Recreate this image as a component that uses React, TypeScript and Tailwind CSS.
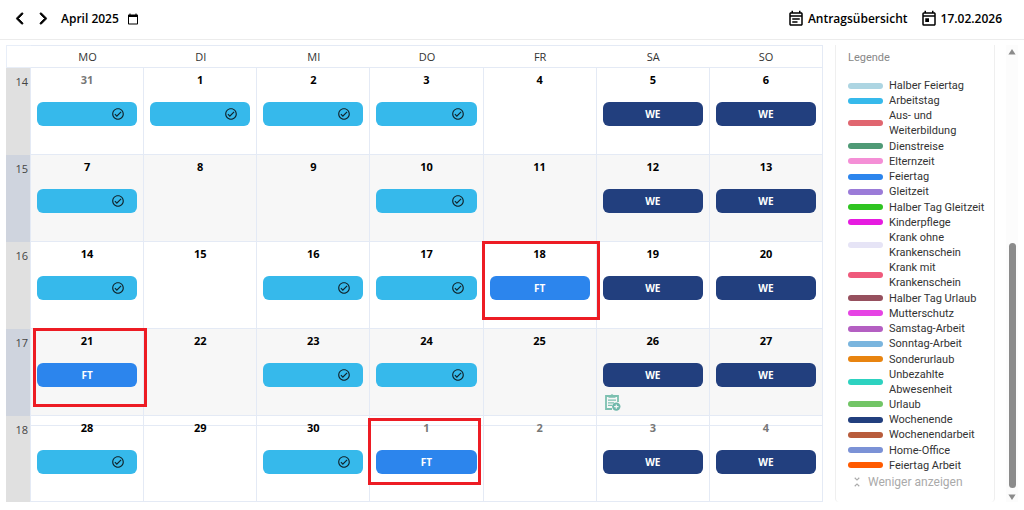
import React from 'react';
import { FaChevronLeft, FaChevronRight } from 'react-icons/fa6';
import {
  MdCalendarToday,
  MdOutlineCheckCircle,
  MdOutlineEventNote,
  MdOutlineToday,
  MdUnfoldLess,
} from 'react-icons/md';
import clsx from 'clsx';

type Kind = 'AT' | 'FT' | 'WE';

interface Day {
  label: number;
  kind?: Kind;
  outside?: boolean;
  request?: boolean;
  mark?: string;
}

interface Week {
  number: number;
  days: Day[];
}

const weekdays = ['MO', 'DI', 'MI', 'DO', 'FR', 'SA', 'SO'];

const weeks: Week[] = [
  {
    number: 14,
    days: [
      { label: 31, kind: 'AT', outside: true },
      { label: 1, kind: 'AT' },
      { label: 2, kind: 'AT' },
      { label: 3, kind: 'AT' },
      { label: 4 },
      { label: 5, kind: 'WE' },
      { label: 6, kind: 'WE' },
    ],
  },
  {
    number: 15,
    days: [
      { label: 7, kind: 'AT' },
      { label: 8 },
      { label: 9 },
      { label: 10, kind: 'AT' },
      { label: 11 },
      { label: 12, kind: 'WE' },
      { label: 13, kind: 'WE' },
    ],
  },
  {
    number: 16,
    days: [
      { label: 14, kind: 'AT' },
      { label: 15 },
      { label: 16, kind: 'AT' },
      { label: 17, kind: 'AT' },
      { label: 18, kind: 'FT', mark: '-top-px bottom-2 -left-0.5 -right-1' },
      { label: 19, kind: 'WE' },
      { label: 20, kind: 'WE' },
    ],
  },
  {
    number: 17,
    days: [
      { label: 21, kind: 'FT', mark: '-top-px bottom-2 left-0.5 -right-1' },
      { label: 22 },
      { label: 23, kind: 'AT' },
      { label: 24, kind: 'AT' },
      { label: 25 },
      { label: 26, kind: 'WE', request: true },
      { label: 27, kind: 'WE' },
    ],
  },
  {
    number: 18,
    days: [
      { label: 28, kind: 'AT' },
      { label: 29 },
      { label: 30, kind: 'AT' },
      { label: 1, kind: 'FT', outside: true, mark: 'top-0.5 bottom-4 -left-0.5 right-0.5' },
      { label: 2, outside: true },
      { label: 3, kind: 'WE', outside: true },
      { label: 4, kind: 'WE', outside: true },
    ],
  },
];

const legend = [
  { name: 'Halber Feiertag', color: 'bg-[#add5e2]' },
  { name: 'Arbeitstag', color: 'bg-[#36b9eb]' },
  { name: 'Aus- und Weiterbildung', color: 'bg-[#e06670]' },
  { name: 'Dienstreise', color: 'bg-[#4f9a76]' },
  { name: 'Elternzeit', color: 'bg-[#f48fd6]' },
  { name: 'Feiertag', color: 'bg-[#2c85ed]' },
  { name: 'Gleitzeit', color: 'bg-[#9b7bd8]' },
  { name: 'Halber Tag Gleitzeit', color: 'bg-[#2fc421]' },
  { name: 'Kinderpflege', color: 'bg-[#e61be0]' },
  { name: 'Krank ohne Krankenschein', color: 'bg-[#e6e4f6]' },
  { name: 'Krank mit Krankenschein', color: 'bg-[#ef5a7c]' },
  { name: 'Halber Tag Urlaub', color: 'bg-[#96505e]' },
  { name: 'Mutterschutz', color: 'bg-[#e644e4]' },
  { name: 'Samstag-Arbeit', color: 'bg-[#b45fc2]' },
  { name: 'Sonntag-Arbeit', color: 'bg-[#7ab5de]' },
  { name: 'Sonderurlaub', color: 'bg-[#e88410]' },
  { name: 'Unbezahlte Abwesenheit', color: 'bg-[#2dd2c0]' },
  { name: 'Urlaub', color: 'bg-[#72c566]' },
  { name: 'Wochenende', color: 'bg-[#223f7e]' },
  { name: 'Wochenendarbeit', color: 'bg-[#b85c3c]' },
  { name: 'Home-Office', color: 'bg-[#7b92d6]' },
  { name: 'Feiertag Arbeit', color: 'bg-[#ff5a00]' },
];

const chipColors: Record<Kind, string> = {
  AT: 'justify-end bg-[#36b9eb] pr-3 text-[#10242c]',
  FT: 'justify-center bg-[#2c85ed] text-white',
  WE: 'justify-center bg-[#223f7e] text-white',
};

function Chip({ kind }: { kind: Kind }) {
  return (
    <div className={clsx('flex h-6 items-center rounded-md text-[10px] font-bold', chipColors[kind])}>
      {kind === 'AT' ? <MdOutlineCheckCircle size={14} /> : kind}
    </div>
  );
}

function RequestIcon() {
  return (
    <svg width="18" height="18" viewBox="0 0 18 18" fill="none" aria-hidden="true">
      <path d="M9 16H3V3h12v6" stroke="#7cc0b0" strokeWidth="1.8" />
      <path d="M5.5 2.2h2a1.6 1.6 0 0 1 3 0h2v2.6h-7z" fill="#7cc0b0" />
      <path d="M5 7.2h8M5 9.8h6M5 12.4h4" stroke="#7cc0b0" strokeWidth="1.3" />
      <circle cx="13.3" cy="13.6" r="4.2" fill="#6fb8ab" />
      <path d="M13.3 11.4v4.4M11.1 13.6h4.4" stroke="#f6f6f6" strokeWidth="1.2" />
    </svg>
  );
}

function Toolbar() {
  return (
    <header className="flex h-10 items-center justify-between border-b border-[#ececec] pr-[22px] pb-0.5 pl-3.5 text-xs font-semibold">
      <div className="flex items-center">
        <button type="button" aria-label="Vorheriger Monat" className="mr-[9px]">
          <FaChevronLeft size={13} stroke="currentColor" strokeWidth={36} />
        </button>
        <button type="button" aria-label="Nächster Monat" className="mr-3">
          <FaChevronRight size={13} stroke="currentColor" strokeWidth={36} />
        </button>
        <button type="button" className="flex items-center gap-2">
          April 2025
          <MdCalendarToday size={12} />
        </button>
      </div>
      <div className="flex items-center gap-3">
        <button type="button" className="flex items-center gap-[3px]">
          <MdOutlineEventNote size={18} />
          Antragsübersicht
        </button>
        <button type="button" className="flex items-center gap-[3px]">
          <MdOutlineToday size={18} />
          17.02.2026
        </button>
      </div>
    </header>
  );
}

function Calendar() {
  return (
    <table className="w-full table-fixed border-separate border-spacing-0">
      <colgroup>
        <col className="w-[25px]" />
        {weekdays.map((name) => (
          <col key={name} />
        ))}
      </colgroup>
      <thead>
        <tr className="h-[23px] text-[11px] leading-4">
          <td className="border-y border-l border-[#e8eef8] p-0" />
          {weekdays.map((name) => (
            <th
              key={name}
              scope="col"
              className="border-y border-[#e4eaf5] p-0 font-normal text-[#333] last:border-r"
            >
              {name}
            </th>
          ))}
        </tr>
      </thead>
      <tbody>
        {weeks.map((week, row) => {
          const odd = row % 2 === 1;
          const last = row === weeks.length - 1;
          return (
            <tr key={week.number} className={last ? 'h-[86px]' : 'h-[87px]'}>
              <th
                scope="row"
                className={clsx(
                  'border-r border-[#e4eaf5] p-0 pt-1.5 pr-0.5 text-right align-top text-[11px] font-normal text-[#444]',
                  odd ? 'bg-[#cfd4de]' : 'bg-[#e0e0e0]',
                )}
              >
                {week.number}
              </th>
              {week.days.map((day, i) => (
                <td
                  key={i}
                  className={clsx(
                    'relative border-r border-b border-[#e4eaf5] px-1.5 py-0 align-top text-[11px]',
                    odd && 'bg-[#f7f7f7]',
                  )}
                >
                  {last && <div className="absolute inset-x-0 top-[9px] h-px bg-[#e4eaf5]" />}
                  <div
                    className={clsx(
                      'relative mb-3.5 pt-1 text-center leading-4 font-bold',
                      day.outside ? 'text-[#777]' : 'text-black',
                    )}
                  >
                    {day.label}
                  </div>
                  {day.kind && <Chip kind={day.kind} />}
                  {day.request && (
                    <button type="button" aria-label="Antrag anzeigen" className="mt-1.5 block">
                      <RequestIcon />
                    </button>
                  )}
                  {day.mark && (
                    <div className={clsx('absolute z-10 border-3 border-[#ed1c24]', day.mark)} />
                  )}
                </td>
              ))}
            </tr>
          );
        })}
      </tbody>
    </table>
  );
}

function Legend() {
  return (
    <aside className="w-40 shrink-0 rounded-b border-x border-[#efefef] pr-2 pl-3 font-[Roboto,sans-serif]">
      <h2 className="pt-[5px] text-[11px] leading-4 text-[#888]">Legende</h2>
      <ul className="mt-3 flex h-[395px] flex-col justify-between text-[11px] leading-[15px] text-[#333]">
        {legend.map((item) => (
          <li key={item.name} className="flex items-center gap-1.5">
            <span className={clsx('h-1.5 w-[35px] shrink-0 rounded-full', item.color)} />
            <span>{item.name}</span>
          </li>
        ))}
      </ul>
      <button type="button" className="ml-0.5 flex items-center gap-1 text-xs leading-[18px] text-[#aaa]">
        <MdUnfoldLess size={14} />
        Weniger anzeigen
      </button>
    </aside>
  );
}

function ScrollRail() {
  return (
    <div className="ml-[11px] flex w-3 shrink-0 flex-col items-center bg-[#fcfcfc] pt-1 pb-0.5 text-[#8b8b8b]" aria-hidden="true">
      <svg width="8" height="6" viewBox="0 0 8 6" fill="currentColor">
        <path d="M4 0l3.6 5.4H.4z" />
      </svg>
      <div className="min-h-[180px] flex-1" />
      <div className="h-[245px] w-[7px] rounded-full bg-[#8b8b8b]" />
      <svg className="mt-1.5" width="8" height="6" viewBox="0 0 8 6" fill="currentColor">
        <path d="M4 6L.4.6h7.2z" />
      </svg>
    </div>
  );
}

export default function App() {
  return (
    <div className="bg-white font-['Open_Sans','Noto_Sans',sans-serif] text-black">
      <Toolbar />
      <main className="flex px-1.5 pt-[5px] pb-2">
        <div className="mr-3 min-w-0 flex-1">
          <Calendar />
        </div>
        <Legend />
        <ScrollRail />
      </main>
    </div>
  );
}
